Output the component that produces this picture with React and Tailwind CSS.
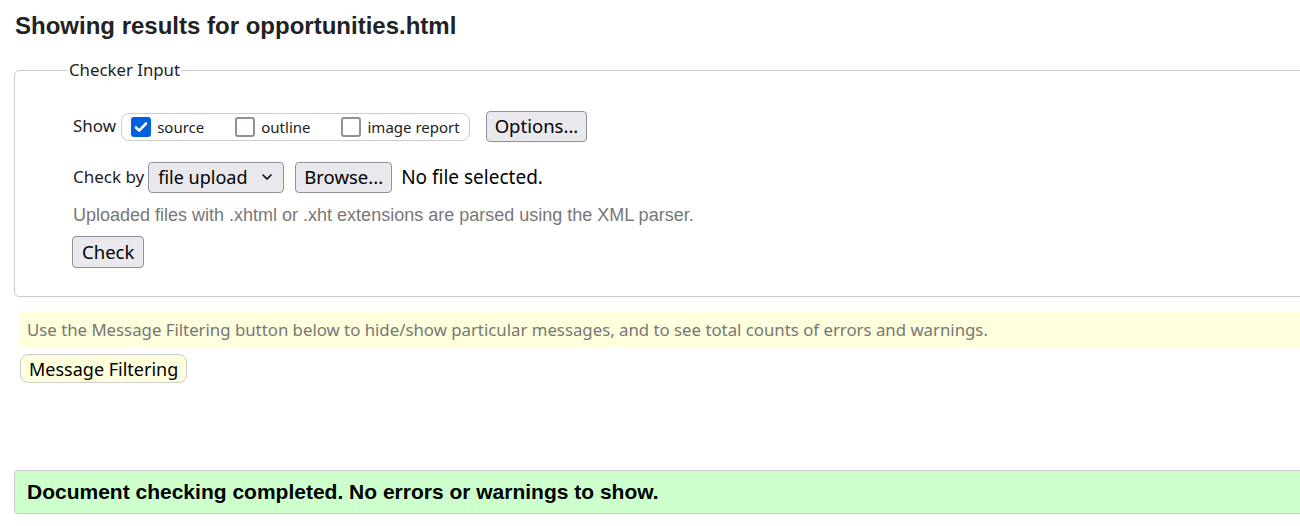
export default function App() {
  return (
    <div className="w-[1300px] h-[526px] overflow-hidden bg-white text-[#222] font-['Noto_Sans',sans-serif]">
      <div className="w-[1340px] pl-[14px]">
        <h1 className="pt-[12px] pl-[1px] font-['Liberation_Sans',Arial,sans-serif] font-bold text-[24px] leading-[28px] text-[#222]">
          Showing results for opportunities.html
        </h1>

        <fieldset className="mt-[19px] border border-[#cccccc] rounded-[5px] pt-[29px] pb-[28px]">
          <legend className="ml-[53px] px-[1px] text-[16.8px] leading-[22px]">Checker Input</legend>

          <div className="pl-[58px]">
            <div className="flex items-center h-[32px]">
              <span className="text-[17px] mr-[5px]">Show</span>
              <div className="flex items-center h-[28px] mt-[2px] border border-[#cccccc] rounded-[8px] pl-[9px] pr-[9px] gap-[31px]">
                <label className="flex items-center gap-[6px] text-[15px]">
                  <span className="w-[20px] h-[20px] rounded-[3px] bg-[#0060df] flex items-center justify-center">
                    <svg width="16" height="16" viewBox="0 0 16 16" fill="none">
                      <path d="M3 8.5l3.2 3.2L13 4.5" stroke="white" strokeWidth="2.6" strokeLinecap="round" strokeLinejoin="round" />
                    </svg>
                  </span>
                  source
                </label>
                <label className="flex items-center gap-[6px] text-[15px]">
                  <span className="w-[20px] h-[20px] rounded-[3px] border-2 border-[#8f8f9d] bg-white" />
                  outline
                </label>
                <label className="flex items-center gap-[6px] text-[15px]">
                  <span className="w-[20px] h-[20px] rounded-[3px] border-2 border-[#8f8f9d] bg-white" />
                  image report
                </label>
              </div>
              <button className="ml-[16px] h-[31px] px-[8px] bg-[#e9e9ed] border border-[#8f8f9d] rounded-[4px] text-[18.5px] text-black leading-none">
                Options...
              </button>
            </div>

            <div className="flex items-center h-[32px] mt-[19px]">
              <span className="text-[17px] mr-[4px]">Check by</span>
              <div className="flex items-center justify-between w-[136px] h-[31px] pl-[9px] pr-[10px] bg-[#e9e9ed] border border-[#8f8f9d] rounded-[4px] text-[18px] text-black">
                <span>file upload</span>
                <svg width="12" height="8" viewBox="0 0 12 8" fill="none">
                  <path d="M2 2l4 4 4-4" stroke="black" strokeWidth="1.6" strokeLinecap="round" strokeLinejoin="round" />
                </svg>
              </div>
              <button className="ml-[11px] h-[31px] px-[8px] bg-[#e9e9ed] border border-[#8f8f9d] rounded-[4px] text-[18.5px] text-black leading-none">
                Browse...
              </button>
              <span className="ml-[9px] text-[19px] text-black">No file selected.</span>
            </div>

            <p className="mt-[11px] font-['Liberation_Sans',Arial,sans-serif] text-[18px] leading-[22px] text-[#777777]">
              Uploaded files with .xhtml or .xht extensions are parsed using the XML parser.
            </p>

            <button className="mt-[10px] -ml-[1px] h-[32px] px-[9px] bg-[#e9e9ed] border border-[#8f8f9d] rounded-[4px] text-[18.5px] text-black leading-none">
              Check
            </button>
          </div>
        </fieldset>

        <div className="mt-[15px] ml-[6px] h-[35px] flex items-center pl-[7px] bg-[#ffffdd] text-[16.8px] text-[#777777]">
          Use the Message Filtering button below to hide/show particular messages, and to see total counts of errors and warnings.
        </div>

        <button className="block mt-[7px] ml-[6px] h-[29px] px-[8px] bg-[#ffffdd] border border-[#cccccc] rounded-[8px] text-[18px] text-black leading-none">
          Message Filtering
        </button>

        <div className="mt-[87px] h-[44px] flex items-center pl-[12px] bg-[#ccffcc] border border-[#cccccc] rounded-[4px] font-['Liberation_Sans',Arial,sans-serif] font-bold text-[21px] text-black">
          Document checking completed. No errors or warnings to show.
        </div>
      </div>
    </div>
  )
}
